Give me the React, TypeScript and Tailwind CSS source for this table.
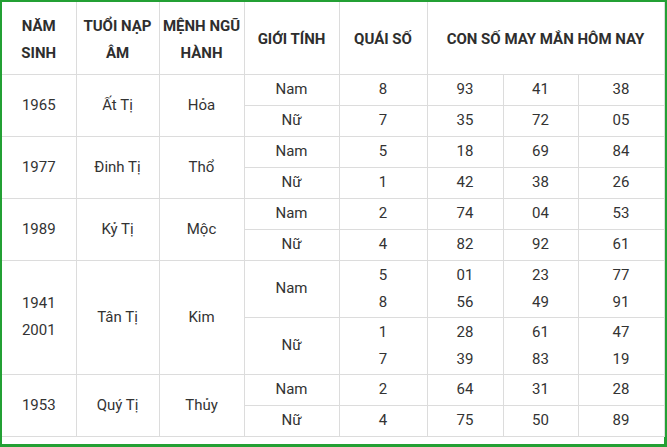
import React from "react";

interface GroupRow {
  gender: string;
  quai: string[];
  lucky: string[][];
}

interface Group {
  years: string[];
  tuoi: string;
  menh: string;
  rows: GroupRow[];
}

const groups: Group[] = [
  {
    years: ["1965"],
    tuoi: "Ất Tị",
    menh: "Hỏa",
    rows: [
      { gender: "Nam", quai: ["8"], lucky: [["93"], ["41"], ["38"]] },
      { gender: "Nữ", quai: ["7"], lucky: [["35"], ["72"], ["05"]] },
    ],
  },
  {
    years: ["1977"],
    tuoi: "Đinh Tị",
    menh: "Thổ",
    rows: [
      { gender: "Nam", quai: ["5"], lucky: [["18"], ["69"], ["84"]] },
      { gender: "Nữ", quai: ["1"], lucky: [["42"], ["38"], ["26"]] },
    ],
  },
  {
    years: ["1989"],
    tuoi: "Kỷ Tị",
    menh: "Mộc",
    rows: [
      { gender: "Nam", quai: ["2"], lucky: [["74"], ["04"], ["53"]] },
      { gender: "Nữ", quai: ["4"], lucky: [["82"], ["92"], ["61"]] },
    ],
  },
  {
    years: ["1941", "2001"],
    tuoi: "Tân Tị",
    menh: "Kim",
    rows: [
      {
        gender: "Nam",
        quai: ["5", "8"],
        lucky: [
          ["01", "56"],
          ["23", "49"],
          ["77", "91"],
        ],
      },
      {
        gender: "Nữ",
        quai: ["1", "7"],
        lucky: [
          ["28", "39"],
          ["61", "83"],
          ["47", "19"],
        ],
      },
    ],
  },
  {
    years: ["1953"],
    tuoi: "Quý Tị",
    menh: "Thủy",
    rows: [
      { gender: "Nam", quai: ["2"], lucky: [["64"], ["31"], ["28"]] },
      { gender: "Nữ", quai: ["4"], lucky: [["75"], ["50"], ["89"]] },
    ],
  },
];

const cell = "border border-[#dcdcdc] text-center align-middle p-0";
const head = "border border-[#dcdcdc] border-t-0 text-center align-middle px-0 pt-[4px] pb-0 leading-[27px] text-[#2e2e2e]";

function Lines({ items }: { items: string[] }) {
  return (
    <>
      {items.map((t) => (
        <div key={t} className="leading-[27px]">
          {t}
        </div>
      ))}
    </>
  );
}

export default function App() {
  return (
    <div
      className="w-[667px] h-[447px] bg-white border-l-2 border-t-2 border-r-[3px] border-b-[3px] border-[#23a034] text-[15px] text-[#333]"
      style={{ fontFamily: "Roboto, 'Liberation Sans', sans-serif" }}
    >
      <table className="w-[662px] table-fixed border-collapse">
        <colgroup>
          <col className="w-[74px]" />
          <col className="w-[83px]" />
          <col className="w-[85px]" />
          <col className="w-[95px]" />
          <col className="w-[88px]" />
          <col className="w-[76px]" />
          <col className="w-[75px]" />
          <col className="w-[86px]" />
        </colgroup>
        <thead>
          <tr className="h-[72px] font-bold">
            <th className={`${head} border-l-0`}>
              NĂM
              <br />
              SINH
            </th>
            <th className={head}>
              TUỔI NẠP
              <br />
              ÂM
            </th>
            <th className={head}>
              MỆNH NGŨ
              <br />
              HÀNH
            </th>
            <th className={head}>GIỚI TÍNH</th>
            <th className={head}>QUÁI SỐ</th>
            <th className={head} colSpan={3}>
              CON SỐ MAY MẮN HÔM NAY
            </th>
          </tr>
        </thead>
        <tbody>
          {groups.map((g) =>
            g.rows.map((r, i) => {
              const tall = r.quai.length > 1;
              return (
                <tr key={g.tuoi + r.gender} className={tall ? "h-[57px]" : "h-[31px]"}>
                  {i === 0 && (
                    <>
                      <td className={`${cell} border-l-0`} rowSpan={2}>
                        <Lines items={g.years} />
                      </td>
                      <td className={cell} rowSpan={2}>
                        {g.tuoi}
                      </td>
                      <td className={cell} rowSpan={2}>
                        {g.menh}
                      </td>
                    </>
                  )}
                  <td className={cell}>{r.gender}</td>
                  <td className={cell}>
                    <Lines items={r.quai} />
                  </td>
                  {r.lucky.map((nums, k) => (
                    <td key={k} className={cell}>
                      <Lines items={nums} />
                    </td>
                  ))}
                </tr>
              );
            })
          )}
        </tbody>
      </table>
    </div>
  );
}
